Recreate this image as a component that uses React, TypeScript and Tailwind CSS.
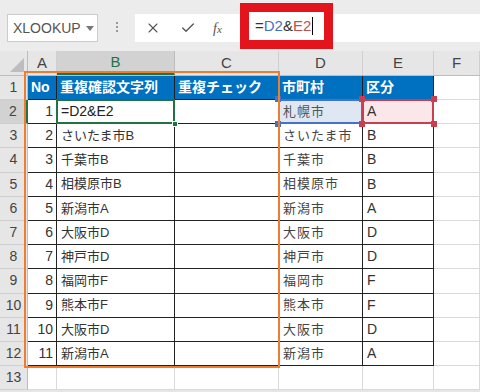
import { X, Check } from 'lucide-react';

const font = { fontFamily: '"Liberation Sans", "Noto Sans CJK JP", sans-serif' };

const colW = ['w-[29px]', 'w-[118px]', 'w-[104px]', 'w-[84px]', 'w-[71px]', 'flex-1'];
const letters = ['A', 'B', 'C', 'D', 'E', 'F'];

const data: [string, string, string, string][] = [
  ['1', '=D2&E2', '札幌市', 'A'],
  ['2', 'さいたま市B', 'さいたま市', 'B'],
  ['3', '千葉市B', '千葉市', 'B'],
  ['4', '相模原市B', '相模原市', 'B'],
  ['5', '新潟市A', '新潟市', 'A'],
  ['6', '大阪市D', '大阪市', 'D'],
  ['7', '神戸市D', '神戸市', 'D'],
  ['8', '福岡市F', '福岡市', 'F'],
  ['9', '熊本市F', '熊本市', 'F'],
  ['10', '大阪市D', '大阪市', 'D'],
  ['11', '新潟市A', '新潟市', 'A'],
];

const Handle = ({ pos, color }: { pos: string; color: string }) => (
  <span className={`absolute h-[6px] w-[6px] ${pos} ${color}`} />
);

const RowHead = ({ n, active }: { n: number; active?: boolean }) => (
  <div
    className={`flex w-[28px] shrink-0 items-center justify-center border-b border-[#cfcfcf] text-[14px] text-[#444] ${
      active ? 'border-r-2 border-r-[#217346] bg-[#d2d2d2]' : 'border-r border-r-[#bdbdbd] bg-[#e6e6e6]'
    }`}
  >
    {n}
  </div>
);

export default function App() {
  return (
    <div className="relative h-[392px] w-[480px] overflow-hidden bg-[#e6e6e6]" style={font}>
      {/* formula bar */}
      <div className="flex h-[51px] items-start bg-[#ececec] pl-[7px]">
        <div className="mt-[14px] flex h-[28px] w-[91px] items-center justify-between border border-[#cccccc] bg-white pl-[5px] pr-[3px] text-[14px] text-[#555]">
          XLOOKUP
          <svg width="8" height="5" viewBox="0 0 8 5">
            <path d="M0 0h8L4 5z" fill="#777" />
          </svg>
        </div>
        <div className="mt-[22px] flex w-[37px] flex-col items-center gap-[2px]">
          <span className="h-[2px] w-[2px] bg-[#999]" />
          <span className="h-[2px] w-[2px] bg-[#999]" />
          <span className="h-[2px] w-[2px] bg-[#999]" />
        </div>
        <div className="mt-[14px] flex h-[28px] w-[105px] items-center bg-white pl-[10px] text-[#555]">
          <X size={16} strokeWidth={1.6} />
          <Check size={16} strokeWidth={2} className="ml-[19px]" />
          <span className="ml-[17px] text-[14px] italic" style={{ fontFamily: '"Liberation Serif", serif' }}>
            f<span className="text-[11px]">x</span>
          </span>
        </div>
        <div className="mt-[3px] flex h-[46px] w-[93px] items-center border-[9px] border-[#e3141c] bg-white pl-[6px] text-[15px]">
          <span className="text-[#333]">=</span>
          <span className="text-[#4472c4]">D2</span>
          <span className="text-[#333]">&amp;</span>
          <span className="text-[#c0504d]">E2</span>
          <span className="ml-[1px] h-[18px] w-[1px] bg-black" />
        </div>
        <div className="mt-[14px] h-[28px] flex-1 bg-white" />
      </div>

      {/* column headers */}
      <div className="flex h-[25px] border-b border-[#bdbdbd] bg-[#e6e6e6] text-[15px] text-[#444]">
        <div className="flex w-[28px] shrink-0 items-end justify-end border-r border-[#bdbdbd] p-[3px]">
          <svg width="14" height="14" viewBox="0 0 14 14">
            <path d="M14 0v14H0z" fill="#bdbdbd" />
          </svg>
        </div>
        {letters.map((l, i) => (
          <div
            key={l}
            className={`flex shrink-0 items-center justify-center ${colW[i]} ${
              l === 'B'
                ? 'border-b-2 border-r border-b-[#217346] border-r-[#bdbdbd] bg-[#d2d2d2] text-[#217346]'
                : 'border-r border-[#cfcfcf]'
            }`}
          >
            {l}
          </div>
        ))}
      </div>

      {/* row 1 header */}
      <div className="flex h-[24px] bg-white">
        <RowHead n={1} />
        {['No', '重複確認文字列', '重複チェック', '市町村', '区分'].map((t, i) => (
          <div
            key={t}
            className={`flex shrink-0 items-center border-b border-r border-[#222] bg-[#0070c0] pl-[3px] text-[14px] font-bold text-white ${colW[i]}`}
          >
            {t}
          </div>
        ))}
        <div className="flex-1 border-b border-r border-[#d9d9d9]" />
      </div>

      {/* data rows */}
      {data.map((r, idx) => {
        const first = idx === 0;
        return (
          <div key={idx} className="flex h-[24.2px] bg-white text-[13px] text-[#333]">
            <RowHead n={idx + 2} active={first} />
            <div className={`flex shrink-0 items-center justify-end border-b border-r border-[#222] pr-[3px] text-[14px] ${colW[0]}`}>
              {r[0]}
            </div>
            <div className={`relative flex shrink-0 items-center border-b border-r border-[#222] pl-[4px] ${colW[1]} ${first ? 'text-[14px] text-[#222]' : ''}`}>
              {r[1]}
              {first && (
                <>
                  <span className="absolute -left-[1px] -top-[1px] bottom-[-1px] right-[-1px] z-10 border-2 border-[#217346]" />
                  <span className="absolute -bottom-[4px] -right-[4px] z-10 h-[6px] w-[6px] border border-white bg-[#217346]" />
                </>
              )}
            </div>
            <div className={`flex shrink-0 items-center border-b border-r border-[#222] ${colW[2]}`} />
            <div
              className={`relative flex shrink-0 items-center border-b border-r border-[#222] pl-[4px] tracking-[1px] ${colW[3]} ${
                first ? 'bg-[#dfe7f3] text-[#555]' : 'text-[#444]'
              }`}
            >
              {r[2]}
              {first && (
                <>
                  <span className="absolute -left-[1px] -top-[1px] bottom-[-1px] right-[-1px] z-10 border-2 border-[#4472c4]" />
                  <Handle pos="-left-[4px] -top-[4px] z-10" color="bg-[#4472c4]" />
                  <Handle pos="-left-[4px] -bottom-[4px] z-10" color="bg-[#4472c4]" />
                </>
              )}
            </div>
            <div
              className={`relative flex shrink-0 items-center border-b border-r border-[#222] pl-[4px] text-[14px] ${colW[4]} ${
                first ? 'bg-[#fbe6e9]' : ''
              }`}
            >
              {r[3]}
              {first && (
                <>
                  <span className="absolute -left-[1px] -top-[1px] bottom-[-1px] right-[-1px] z-20 border-2 border-[#c8404f]" />
                  <Handle pos="-left-[4px] -top-[4px] z-20" color="bg-[#c8404f]" />
                  <Handle pos="-left-[4px] -bottom-[4px] z-20" color="bg-[#c8404f]" />
                  <Handle pos="-right-[4px] -top-[4px] z-20" color="bg-[#c8404f]" />
                  <Handle pos="-right-[4px] -bottom-[4px] z-20" color="bg-[#c8404f]" />
                </>
              )}
            </div>
            <div className="flex-1 border-b border-r border-[#d9d9d9]" />
          </div>
        );
      })}

      {/* row 13 */}
      <div className="flex h-[24px] bg-white">
        <RowHead n={13} />
        {colW.map((w) => (
          <div key={w} className={`shrink-0 border-b border-r border-[#d9d9d9] ${w}`} />
        ))}
      </div>

      {/* orange annotation frame */}
      <div className="pointer-events-none absolute left-[24px] top-[71px] z-30 h-[297px] w-[256px] border-2 border-[#ed7d31]" />
    </div>
  );
}
